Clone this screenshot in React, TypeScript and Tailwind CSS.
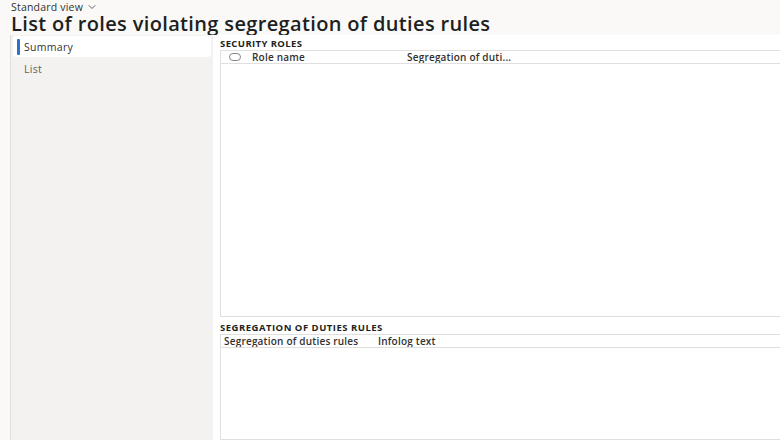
import { ChevronDown } from 'lucide-react'

const font = { fontFamily: '"Open Sans", "Noto Sans", sans-serif' }

function Grid({ columns, radio, height }: { columns: { label: string; width: string }[]; radio?: boolean; height: string }) {
  return (
    <div className={`ml-[7px] border border-r-0 border-[#e1dfdd] ${height}`}>
      <div className="flex h-[13px] items-center border-b border-[#e1dfdd] text-[10px] font-semibold leading-[12px] tracking-[0.2px] text-[#323130]">
        {radio && (
          <div className="flex w-[31px] justify-start pl-[8px]">
            <span className="h-[8px] w-[12px] rounded-full border border-[#8a8886]" />
          </div>
        )}
        {columns.map((c) => (
          <div key={c.label} className={`${c.width} truncate`}>
            {c.label}
          </div>
        ))}
      </div>
    </div>
  )
}

export default function App() {
  return (
    <div className="h-[440px] w-[780px] overflow-hidden bg-[#faf9f8] text-[#323130]" style={font}>
      <header className="h-[35px] pl-[11px] pt-[1px]">
        <div className="flex h-[12px] items-center gap-[3px] text-[10.5px] leading-[12px] tracking-[0.2px] text-[#323130]">
          Standard view
          <ChevronDown className="h-[12px] w-[12px]" strokeWidth={1.5} />
        </div>
        <h1 className="text-[20px] font-semibold leading-[22px] tracking-[0.35px] text-[#201f1e]">
          List of roles violating segregation of duties rules
        </h1>
      </header>

      <div className="flex h-[405px]">
        <nav className="ml-[10px] w-[203px] border-l border-[#e1dfdd] bg-[#f3f2f1] px-[2px] pt-px">
          <div className="flex h-[21px] items-center rounded-[3px] bg-white pl-[4px]">
            <span className="h-[16px] w-[3px] rounded-[1px] bg-[#2f6fd0]" />
            <span className="ml-[4px] text-[10.5px] leading-[14px] tracking-[0.3px] text-[#323130]">Summary</span>
          </div>
          <div className="flex h-[23px] items-center pl-[11px] text-[10.5px] leading-[14px] tracking-[0.3px] text-[#605e5c]">
            List
          </div>
        </nav>

        <main className="flex flex-1 flex-col bg-white">
          <div className="flex h-[15px] items-end pl-[7px] text-[9.5px] font-bold leading-[12px] tracking-[0.4px] text-[#201f1e]">
            SECURITY ROLES
          </div>
          <Grid
            radio
            height="h-[267px]"
            columns={[
              { label: 'Role name', width: 'w-[155px]' },
              { label: 'Segregation of duti...', width: 'w-[120px]' },
            ]}
          />
          <div className="flex h-[17px] items-end pl-[7px] text-[9.5px] font-bold leading-[12px] tracking-[0.5px] text-[#201f1e]">
            SEGREGATION OF DUTIES RULES
          </div>
          <Grid
            height="flex-1"
            columns={[
              { label: 'Segregation of duties rules', width: 'w-[157px] pl-[3px]' },
              { label: 'Infolog text', width: 'w-[120px]' },
            ]}
          />
        </main>
      </div>
    </div>
  )
}
